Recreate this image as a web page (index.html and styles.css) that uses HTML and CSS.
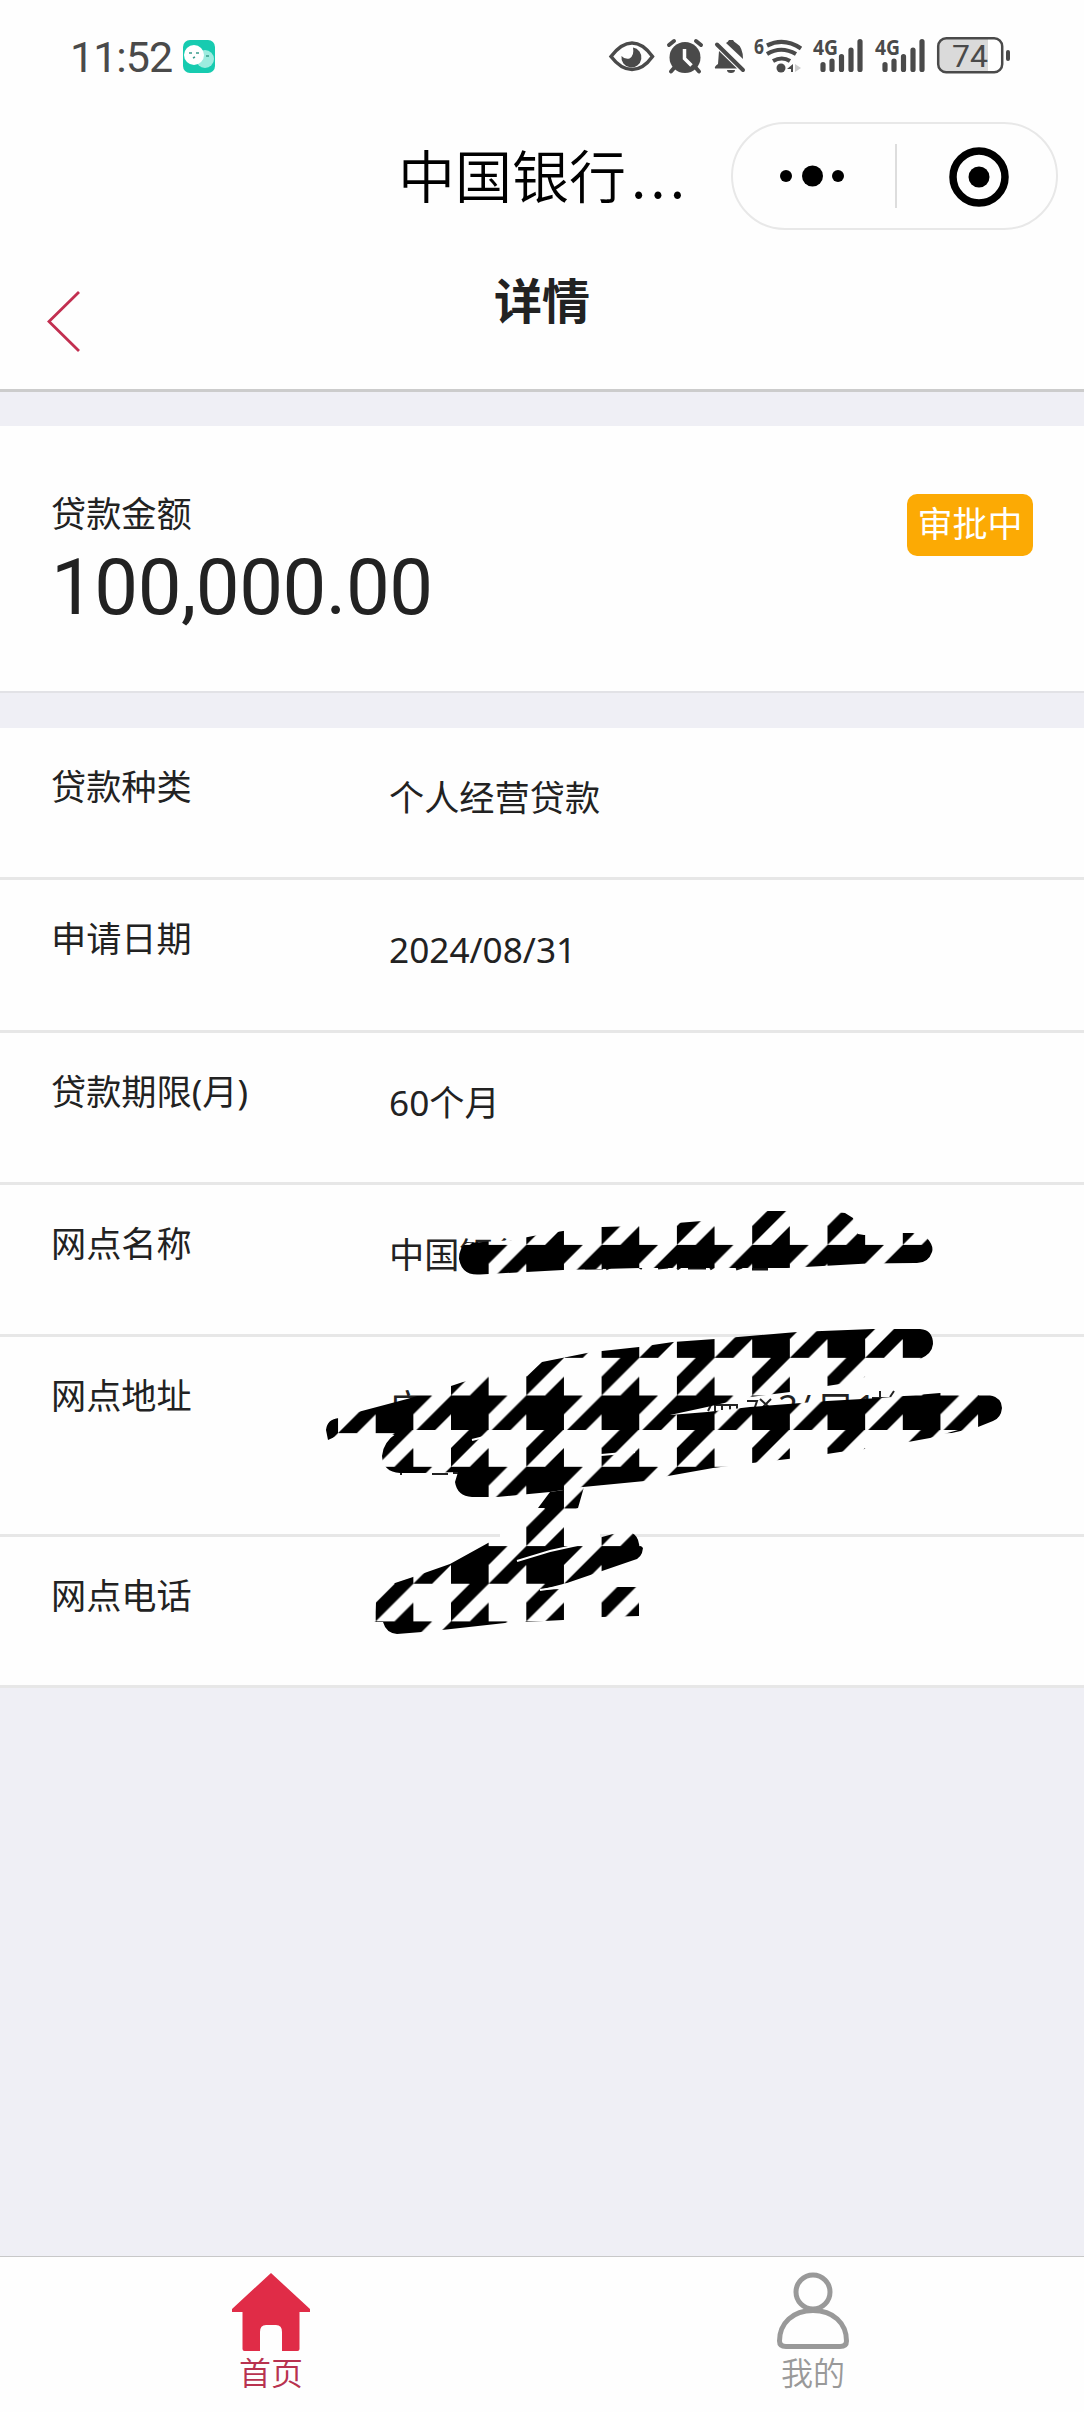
FILE: index.html
```html
<!DOCTYPE html>
<html lang="zh-CN">
<head>
    <meta charset="utf-8">
    <title>详情</title>
    <link rel="stylesheet" href="styles.css">
</head>
<body>
    <div class="status">
        <span class="time">11:52</span>
        <svg class="chat" viewBox="0 0 32 33">
            <rect width="32" height="33" rx="7" fill="#17cbb0"/>
            <circle cx="22" cy="19" r="9" fill="#9decdf"/>
            <circle cx="11" cy="15" r="10" fill="#fff"/>
            <path d="M6 13h3M13 13h3M10 18l2-1M23 16h3" stroke="#3a9c8c" stroke-width="1.6"/>
        </svg>
        <svg class="icons" viewBox="600 30 420 50">
            <!-- eye -->
            <path d="M611 56.500C619 46 625 43 632 43s13 3 20.500 13.500C645 67 638 69.500 632 69.500S619 67 611 56.500z" fill="none" stroke="#4a4a4a" stroke-width="3.500"/>
            <path d="M633 47.500a10 10 0 1 1-11.500 8.500q3 3.500 8 2.500q5-3 3.500-11z" fill="#4a4a4a"/>
            <!-- alarm -->
            <circle cx="685" cy="57.500" r="15.500" fill="#4a4a4a"/>
            <path d="M669 45l5-4M701 45l-5-4M674 68l-3 3.500M696 68l3 3.500" stroke="#4a4a4a" stroke-width="4" stroke-linecap="round"/>
            <path d="M684.500 49v9.500l7 7" fill="none" stroke="#fff" stroke-width="3.500"/>
            <!-- muted bell -->
            <path d="M726 43q2-1 3-3h4q1 2 3 3 7 4 7 16zM719 51l18 17.500h-22q-1-2 3-4.500zM727 70h8q0 3-4 3t-4-3z" fill="#4a4a4a"/>
            <path d="M717 44.500l26 25.500" stroke="#4a4a4a" stroke-width="4" stroke-linecap="round"/>
            <!-- wifi -->
            <text x="754" y="53.500" class="tiny" textLength="10" lengthAdjust="spacingAndGlyphs">6</text>
            <path d="M767 45.500q17-8.500 34 3M767 54q14-8.500 29 0M773 61q9-5 17 0" fill="none" stroke="#4a4a4a" stroke-width="4.200"/>
            <circle cx="781" cy="68" r="4.500" fill="#4a4a4a"/>
            <path d="M793 64v8h-2v-3h-4z" fill="#4a4a4a"/>
            <path d="M795 64l6 4-6 4z" fill="#ccc"/>
            <!-- signal bars, one set per sim -->
            <g id="sim">
                <text x="813" y="55" class="tiny" textLength="25" lengthAdjust="spacingAndGlyphs">4G</text>
                <path d="M823 64.500v5M832 61v8.500M841.500 56.500v13M851 50v19.500M860 41.500v28" stroke="#4a4a4a" stroke-width="5.200" stroke-linecap="round"/>
            </g>
            <use href="#sim" x="62"/>
            <!-- battery -->
            <rect x="938" y="38" width="64" height="34" rx="8" fill="#fff"/>
            <path d="M988 38h-42q-8 0-8 8v18q0 8 8 8h42z" fill="#dadada"/>
            <rect x="938.200" y="38.200" width="64" height="34" rx="8" fill="none" stroke="#4a4a4a" stroke-width="2.500"/>
            <rect x="1006" y="50" width="4" height="11" rx="2" fill="#4a4a4a"/>
            <text x="952" y="67" class="level">74</text>
        </svg>
    </div>

    <div class="appbar">
        <span class="appname">中国银行<span class="more">...</span></span>
        <div class="capsule">
            <svg class="menu" viewBox="0 0 162 104">
                <circle cx="53" cy="52" r="6"/>
                <circle cx="79.500" cy="52" r="10.500"/>
                <circle cx="105" cy="52" r="6"/>
            </svg>
            <svg class="close" viewBox="0 0 160 104">
                <circle cx="83.500" cy="53" r="26" fill="none" stroke="#000" stroke-width="7.500"/>
                <circle cx="83.500" cy="53" r="10.500"/>
            </svg>
        </div>
    </div>

    <div class="header">
        <svg class="back" viewBox="0 0 36 64">
            <path d="M33 3L3 32.500L33 62" fill="none" stroke="#c22f50" stroke-width="2.800"/>
        </svg>
        <h1>详情</h1>
    </div>

    <div class="summary">
        <div>
            <div class="label">贷款金额</div>
            <div class="amount">100,000.00</div>
        </div>
        <span class="badge">审批中</span>
    </div>

    <div class="list">
        <div class="row"><span class="label">贷款种类</span><span class="value">个人经营贷款</span></div>
        <div class="row"><span class="label">申请日期</span><span class="value">2024/08/31</span></div>
        <div class="row"><span class="label">贷款期限(月)</span><span class="value">60个月</span></div>
        <div class="row"><span class="label">网点名称</span><span class="value">中国银行</span></div>
        <div class="row tall"><span class="label">网点地址</span><span class="value">广</span></div>
        <div class="row"><span class="label">网点电话</span><span class="value"></span></div>

        <!-- houndstooth brush over the branch details -->
        <svg class="scribble" viewBox="300 1190 720 460">
            <defs>
                <pattern id="tooth" x="451" y="1395.500" width="75.300" height="75.300" patternUnits="userSpaceOnUse" viewBox="0 0 8 8">
                    <rect width="8" height="8" fill="#fefefe"/>
                    <path d="M0 0H6L4 2V4H0zM8 0V2L6 4H4zM0 6L2 4H4L0 8zM4 6V8H2z"/>
                </pattern>
                <pattern id="tooth2" x="451" y="1391.500" width="75.300" height="75.300" patternUnits="userSpaceOnUse" viewBox="0 0 8 8">
                    <rect width="8" height="8" fill="#fefefe"/>
                    <path d="M0 0H6L4 2V4H0zM8 0V2L6 4H4zM0 6L2 4H4L0 8zM4 6V8H2z"/>
                </pattern>
            </defs>
            <g class="peek">
                <text x="778" y="1420">2/</text>
                <text x="818" y="1420">口</text>
                <text x="856" y="1420">1</text>
            </g>
            <path d="M708 1411l4-8M715 1411v-6h22v6M722 1405v5M730 1405v5M747 1401h10l-3 9M760 1399l11 10M771 1399l-10 10M872 1398h30M880 1391v8M894 1391l-4 6M401 1473v2M432 1474h16M453 1473h8" fill="none" stroke="#222" stroke-width="2"/>
            <path d="M585 1268h18M606 1269l8-4M640 1269l3-5M658 1268l10-1M677 1269l6-4M688 1268h18M710 1269l5-3M736 1269l6-2M752 1269h16" stroke="#111" stroke-width="3"/>
            <path fill="url(#tooth)" d="M467 1243L513 1240L533 1236L563 1231L602 1227L640 1226L677 1223L702 1221L752 1219L767 1211H786L825 1216Q836 1211 845 1213L853 1218L858 1234L864 1235L900 1233H913L927 1238Q934 1246 932 1252Q928 1264 915 1263L867 1263.500L787 1268H640L563 1270L480 1274.500Q462 1276 459 1259Q459 1247 467 1243z"/>
            <path fill="url(#tooth)" d="M326 1430Q327 1419 339 1418L358 1412L407 1399L451 1386L463 1382L488 1376L527 1376L542 1362L587 1353L602 1351L639 1347L673 1342L715 1339L797 1332L873 1329H920Q933 1330 933 1344Q932 1354 920 1359L865 1377L840 1384L827 1386L790 1392L750 1397L707 1407L670 1415L707 1412L750 1407L827 1401L880 1398L940 1393L977 1395H990Q1002 1398 1002 1408Q1001 1418 993 1421L978 1427L943 1435H339L328 1440z"/>
            <path fill="url(#tooth2)" d="M339 1430H958L930 1438L908 1442L873 1448L840 1452L827 1454L788 1459L752 1463L713 1468L668 1476L645 1481L583 1487L550 1492L497 1497H472Q457 1496 455 1482L458 1472L425 1473H400Q383 1472 382 1456Q383 1442 397 1433L395 1430z"/>
            <path fill="url(#tooth)" d="M550 1492L584 1487L578 1508L563 1515V1525L600 1530V1540L540 1553L516 1561L500 1545V1530L526 1526L545 1508H538z"/>
            <path fill="url(#tooth)" d="M376 1602L395 1583L413 1577L450 1564L488 1543L500 1538L535 1550L602 1537L613 1534L632 1533Q638 1536 639 1544L643 1548Q642 1558 634 1560L602 1571L567 1583L540 1590L600 1587H639V1616L602 1617L563 1620L525 1622L505 1623L442 1630L422 1632L397 1634Q386 1633 383 1622L374 1622z"/>
            <path d="M517 1561L550 1551L582 1544M540 1590L567 1586M472 1440L492 1435M601 1455L635 1452" fill="none" stroke="#fefefe" stroke-width="2"/>
        </svg>
    </div>

    <div class="tabbar">
        <a class="tab active">
            <svg viewBox="0 0 80 80">
                <path d="M40 1L79 37V40H68.500V77q0 2-2 2H51V60q0-7-6-7H35q-6 0-6 7V79H13.500q-2 0-2-2V40H1V37z" fill="#e02c47"/>
            </svg>
            首页
        </a>
        <a class="tab">
            <svg viewBox="0 0 80 80">
                <circle cx="40" cy="20" r="17" fill="none" stroke="#999" stroke-width="5"/>
                <path d="M40 38.500C20 38.500 6.500 51 6.500 69Q6.500 74.500 13 74.500H67Q73.500 74.500 73.500 69C73.500 51 60 38.500 40 38.500z" fill="none" stroke="#999" stroke-width="5"/>
            </svg>
            我的
        </a>
    </div>
</body>
</html>
```

FILE: styles.css
```css
* {
    box-sizing: border-box;
}
body {
    margin: 0;
    height: 2412px;
    display: flex;
    flex-direction: column;
    background-color: #efeff5;
    color: #222;
    font-family: "Noto Sans", "Noto Sans CJK SC", sans-serif;
    font-size: 35.200px;
}
svg {
    display: block;
}

.status {
    height: 114px;
    padding: 30px 64px 34px 70px;
    display: flex;
    background-color: #fefefe;
}
.time {
    width: 107px;
    flex-shrink: 0;
    line-height: 55px;
    font-family: Roboto, sans-serif;
    font-size: 43px;
    letter-spacing: -1px;
    color: #4a4a4a;
}
.chat {
    width: 32px;
    height: 33px;
    margin: 10px 0 0 6px;
}
.icons {
    width: 420px;
    height: 50px;
    margin-left: auto;
}
.tiny {
    font: bold 22px "Noto Sans", sans-serif;
    fill: #4a4a4a;
}
.level {
    font: 400 32px Roboto, sans-serif;
    fill: #4a4a4a;
}

.appbar {
    height: 124px;
    padding: 8px 26px 0 398px;
    display: flex;
    justify-content: space-between;
    background-color: #fefefe;
}
.appname {
    line-height: 102px;
    font-size: 57px;
    font-weight: 350;
    font-family: "Noto Sans CJK SC", sans-serif;
    color: #000;
}
.more {
    letter-spacing: 4px;
    margin-left: 5px;
}
.capsule {
    width: 327px;
    height: 108px;
    border: 2px solid #e8e8e8;
    border-radius: 54px;
    display: flex;
    align-items: center;
}
.menu {
    width: 162px;
    height: 104px;
}
.close {
    width: 161px;
    height: 104px;
    background: linear-gradient(#ddd, #ddd) 0 50% / 2px 64px no-repeat;
}

.header {
    height: 154px;
    padding: 0 46px;
    display: grid;
    grid-template-columns: 36px 1fr 36px;
    background-color: #fefefe;
    border-bottom: 3px solid #ccc;
}
.back {
    width: 36px;
    height: 64px;
    margin-top: 51px;
}
h1 {
    margin: 31px 0 0;
    line-height: 64px;
    font-size: 48px;
    text-align: center;
}

.summary {
    height: 267px;
    margin-top: 34px;
    padding: 67px 51px 0;
    display: flex;
    justify-content: space-between;
    align-items: flex-start;
    background-color: #fefefe;
    border-bottom: 2px solid #e2e2e6;
}
.label {
    line-height: 40px;
}
.amount {
    line-height: 90px;
    margin-top: 10px;
    font-family: Roboto, sans-serif;
    font-size: 78px;
    letter-spacing: -0.500px;
}
.badge {
    width: 126px;
    height: 62px;
    margin-top: 1px;
    line-height: 59px;
    border-radius: 10px;
    background-color: #fcaa04;
    color: white;
    font-size: 35px;
    text-align: center;
}

.list {
    position: relative;
    margin-top: 35px;
}
.row {
    height: 152.300px;
    padding: 38px 51px 0;
    display: flex;
    background-color: #fefefe;
    border-bottom: 3px solid #e7e7e7;
}
.row .label {
    width: 338px;
}
.tall {
    height: 200px;
}
.row:nth-child(6) {
    height: 151px;
}
.value {
    margin-top: 11px;
    line-height: 40px;
}
.scribble {
    position: absolute;
    left: 300px;
    top: 462px;
    width: 720px;
    height: 460px;
}
.peek {
    font-size: 35px;
    fill: #222;
}

.tabbar {
    margin-top: auto;
    height: 156px;
    display: flex;
    background-color: #fefefe;
    border-top: 1px solid #c8c8c8;
}
.tab {
    flex: 1;
    padding-top: 15px;
    display: flex;
    flex-direction: column;
    align-items: center;
    font-family: "Noto Sans CJK SC", sans-serif;
    font-size: 32px;
    font-weight: 350;
    line-height: 39px;
    color: #999;
}
.tab svg {
    width: 80px;
    height: 80px;
}
.active {
    color: #b8324f;
}
```
